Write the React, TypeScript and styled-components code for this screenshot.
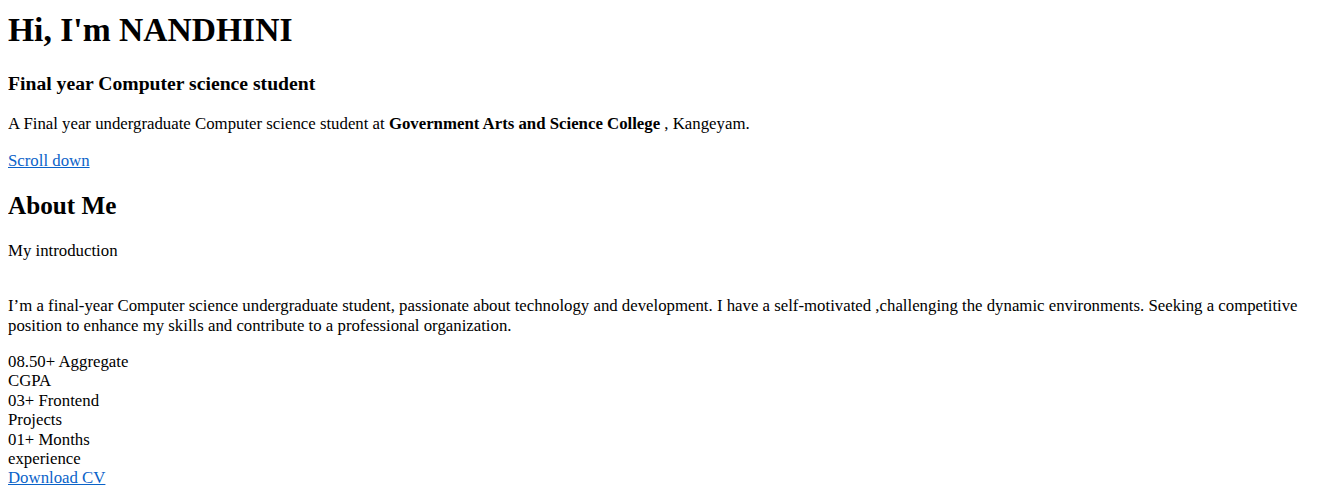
import React from "react";
import styled, { createGlobalStyle } from "styled-components";

const Global = createGlobalStyle`
  body {
    margin: 8px;
    font-family: "Liberation Serif", "Times New Roman", serif;
    font-size: 16.8px;
    line-height: 19.4px;
    color: #000;
    background: #fff;
  }
`;

const Title = styled.h1`
  font-size: 33.6px;
  line-height: 38.6px;
  font-weight: bold;
  margin: 3px 0 22.5px;
`;

const Subtitle = styled.h3`
  font-size: 19.66px;
  line-height: 22.6px;
  font-weight: bold;
  margin: 19.7px 0;
`;

const Para = styled.p`
  margin: 16.8px 0;
`;

const Link = styled.a`
  color: #0b63c9;
  text-decoration: underline;
`;

const SectionTitle = styled.h2`
  font-size: 25.2px;
  line-height: 29px;
  font-weight: bold;
  margin: 20.9px 0;
`;

const Intro = styled.div`
  padding-bottom: 19.4px;
`;

const Stats = styled.div`
  display: flex;
  flex-direction: column;
`;

const StatLine = styled.div``;

export default function App() {
  return (
    <>
      <Global />
      <section>
        <Title>Hi, I'm NANDHINI</Title>
        <Subtitle>Final year Computer science student</Subtitle>
        <Para>
          A Final year undergraduate Computer science student at{" "}
          <b>Government Arts and Science College</b> , Kangeyam.
        </Para>
        <Link href="#about">Scroll down</Link>
      </section>
      <section id="about">
        <SectionTitle>About Me</SectionTitle>
        <Intro>My introduction</Intro>
        <Para>
          I’m a final-year Computer science undergraduate student, passionate about technology and development. I have a
          self-motivated ,challenging the dynamic environments. Seeking a competitive position to enhance my skills and
          contribute to a professional organization.
        </Para>
        <Stats>
          <StatLine>08.50+ Aggregate</StatLine>
          <StatLine>CGPA</StatLine>
          <StatLine>03+ Frontend</StatLine>
          <StatLine>Projects</StatLine>
          <StatLine>01+ Months</StatLine>
          <StatLine>experience</StatLine>
        </Stats>
        <Link href="#">Download CV</Link>
      </section>
    </>
  );
}
